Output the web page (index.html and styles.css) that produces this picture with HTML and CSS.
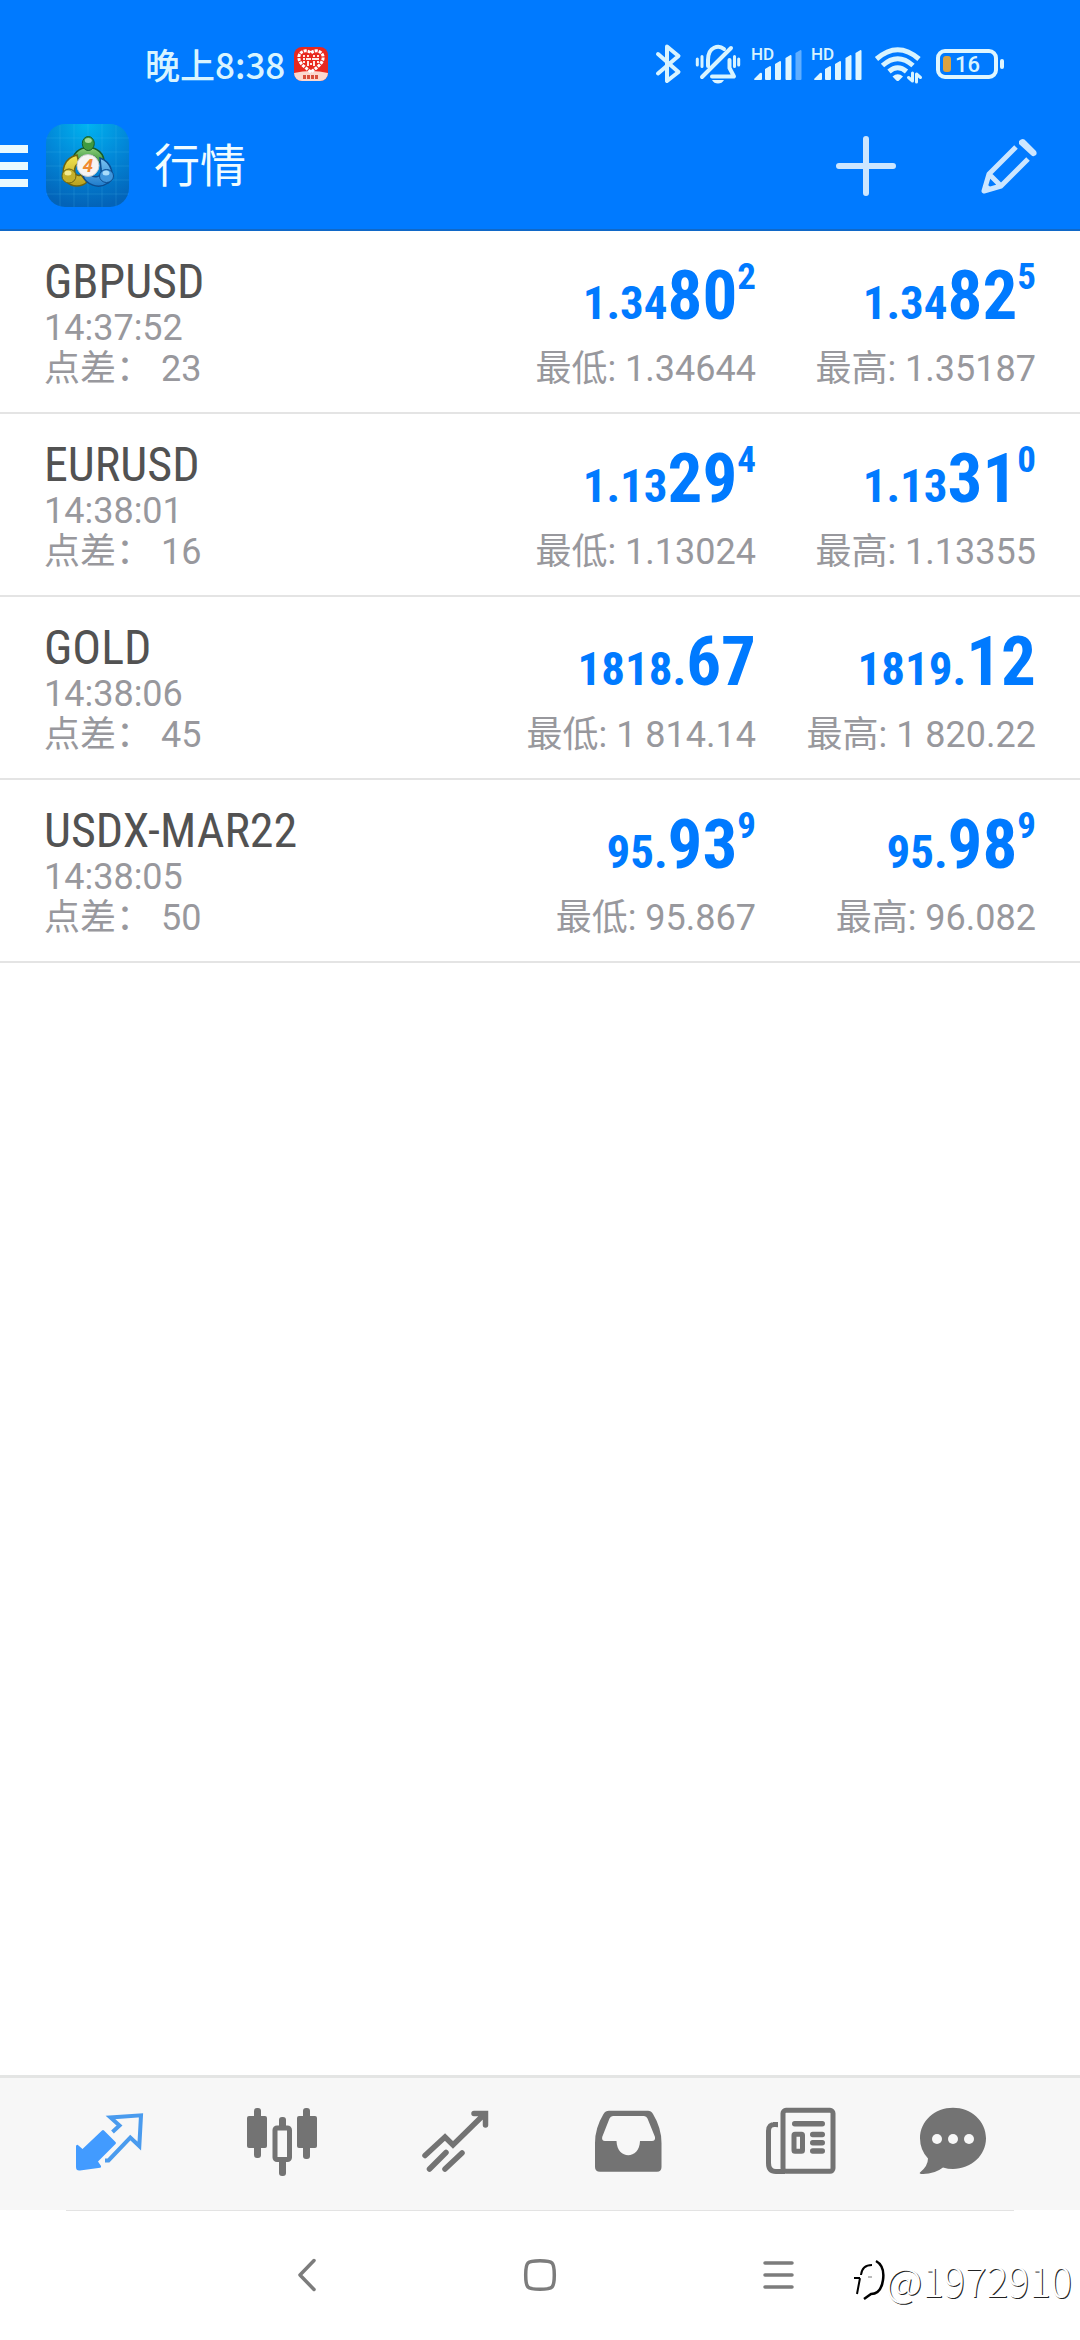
FILE: index.html
```html
<!DOCTYPE html>
<html lang="zh-CN">
<head>
<meta charset="utf-8">
<meta name="viewport" content="width=device-width, initial-scale=1">
<title>行情</title>
<link rel="stylesheet" href="styles.css">
</head>
<body>
<header class="top">
  <div class="status">
    <div class="status-left">
      <span class="clock">晚上8:38</span>
      <svg class="note-icon" viewBox="0 0 34 34" aria-hidden="true">
        <rect width="34" height="34" rx="8" fill="#e8291f"/>
        <path d="M0 26Q17 22 34 26a8 8 0 0 1-8 8H8a8 8 0 0 1-8-8Z" fill="#fbd9cf"/>
        <path d="M17 25C9 19 4 15 5 9c1-5 8-7 12-3c4-4 11-2 12 3c1 6-4 10-12 16Z" fill="none" stroke="#fff" stroke-width="3" stroke-dasharray="3 1"/>
        <path d="M10 8v9M14 8v12M20 8v12M24 8v9M9 12h16M13 17h8" stroke="#ffe9e4" stroke-width="2" stroke-dasharray="2 1"/>
        <path d="M9 30h16" stroke="#d8503c" stroke-width="4" stroke-dasharray="3 1"/>
      </svg>
    </div>
    <div class="status-right">
      <svg width="28" height="40" viewBox="0 0 28 40" aria-label="蓝牙"><path class="s-line" d="M2 10L22.500 28L11 37V2.500L22.500 12L2 29.500"/></svg>
      <svg width="44" height="40" viewBox="0 0 44 40" aria-label="静音">
        <path class="s-line" d="M6 33L35 4M12 22V16C12 2 23 1 28 5M33.500 16V24L38 32.500H16"/>
        <path class="s-thin" d="M1.300 15v6M6 12.500v10M38.500 12.500v10M42.700 15v6"/>
        <path class="s-fill" d="M16 36h12q-2 3.500-6 3.500t-6-3.500Z"/>
      </svg>
      <svg width="48" height="40" viewBox="0 0 48 40" aria-label="信号">
        <text class="hd" x="-1" y="16">HD</text>
        <path class="s-fill" d="M2 35l6-6q2-1 2 1v5q0 1-1 1H3q-1 0-1-1ZM13 25l5-3q1 0 1 1v12q0 1-1 1h-4q-1 0-1-1ZM23 20l5-3q1 0 1 1v17q0 1-1 1h-4q-1 0-1-1ZM33.500 14l5-3q1 0 1 1v23q0 1-1 1h-4q-1 0-1-1Z"/>
        <path class="s-dim" d="M43.500 9l5-3q1 0 1 1v28q0 1-1 1h-4q-1 0-1-1Z"/>
      </svg>
      <svg width="48" height="40" viewBox="0 0 48 40" aria-label="信号">
        <text class="hd" x="-1" y="16">HD</text>
        <path class="s-fill" d="M2 35l6-6q2-1 2 1v5q0 1-1 1H3q-1 0-1-1ZM13 25l5-3q1 0 1 1v12q0 1-1 1h-4q-1 0-1-1ZM23 20l5-3q1 0 1 1v17q0 1-1 1h-4q-1 0-1-1ZM33.500 14l5-3q1 0 1 1v23q0 1-1 1h-4q-1 0-1-1ZM43.500 9l5-3q1 0 1 1v28q0 1-1 1h-4q-1 0-1-1Z"/>
      </svg>
      <svg width="50" height="40" viewBox="0 0 50 40" aria-label="无线网络">
        <path class="s-wide" d="M4.500 15Q25.700-3.500 47 15M10.500 21.500Q25.700 8 41 21.500M17 27.500Q25.700 20 34.500 27.500"/>
        <path class="s-fill" d="M20.500 32.500Q25.700 28 31 32.500L27 36.500Q25.700 37.500 24.400 36.500Z"/>
        <path class="s-thin" d="M40.500 29v8l-4-3.500M44.500 38v-8l4 3.500"/>
      </svg>
      <svg width="70" height="40" viewBox="0 0 70 40" aria-label="电量">
        <rect x="4" y="7" width="58" height="26" rx="7" fill="none" stroke="#dff6ff" stroke-width="4"/>
        <rect x="9" y="12" width="8" height="16" rx="3" fill="#dba240"/>
        <rect class="s-fill" x="66" y="15" width="4" height="10" rx="2"/>
        <text class="level" x="21" y="28">16</text>
      </svg>
    </div>
  </div>
  <div class="appbar">
    <button class="bare" type="button" aria-label="菜单"><svg width="28" height="42" viewBox="0 0 28 42"><path d="M0 0h28v8H0ZM0 17h28v8H0ZM0 34h28v8H0Z" fill="#eafaff"/></svg></button>
    <svg class="logo" viewBox="0 0 83 83" aria-hidden="true">
      <defs>
        <radialGradient id="sky" cx=".5" cy="0" r="1"><stop offset="0" stop-color="#00b4f0"/><stop offset=".5" stop-color="#0288d8"/><stop offset="1" stop-color="#0363b8"/></radialGradient>
        <linearGradient id="gr" x2="0" y2="1"><stop offset="0" stop-color="#8fd07a"/><stop offset="1" stop-color="#2f8f3a"/></linearGradient>
        <linearGradient id="ye" x2="0" y2="1"><stop offset="0" stop-color="#f4e650"/><stop offset="1" stop-color="#b8a020"/></linearGradient>
        <linearGradient id="bl" x2="0" y2="1"><stop offset="0" stop-color="#7cc4f2"/><stop offset="1" stop-color="#1f7ccc"/></linearGradient>
      </defs>
      <rect width="83" height="83" rx="19" fill="url(#sky)"/>
      <path d="M14 1v81M28 0v83M42 0v83M56 0v83M70 1v81M0 14h83M0 28h83M0 42h83M0 56h83M0 70h83" stroke="#5cc8f8" stroke-opacity=".18"/>
      <path d="M27 40C24 18 60 18 58 40L51 37C50 29 35 29 34 37Z" fill="url(#gr)" stroke="#175c28" stroke-width="1.500"/>
      <path d="M31 31C18 34 14 47 20 57C26 64 36 63 41 58L35 51C28 54 26 43 33 39Z" fill="url(#ye)" stroke="#6e6410" stroke-width="1.500"/>
      <path d="M54 34C66 38 70 54 62 59C52 66 40 60 37 52L44 49C47 55 57 54 55 45Z" fill="url(#bl)" stroke="#0d4d90" stroke-width="1.500"/>
      <ellipse cx="42.300" cy="19.500" rx="6" ry="7" fill="#3f9a40" stroke="#175c28"/>
      <ellipse cx="23" cy="52" rx="7" ry="7" fill="#c4b02a" stroke="#6e6410"/>
      <ellipse cx="60.500" cy="52" rx="7" ry="6.500" fill="#3f96dc" stroke="#0d4d90"/>
      <ellipse cx="42.300" cy="16.500" rx="3.500" ry="2.500" fill="#a6dc98"/>
      <ellipse cx="22" cy="49" rx="3.500" ry="2.500" fill="#f3ea90"/>
      <ellipse cx="60" cy="49" rx="3.500" ry="2.500" fill="#a8dcfa"/>
      <circle cx="42" cy="41.500" r="11" fill="#f6f4f2" stroke="#c8ccd0"/>
      <text class="logo-four" x="42" y="48" text-anchor="middle">4</text>
    </svg>
    <h1 class="title">行情</h1>
    <div class="actions">
      <button class="bare" type="button" aria-label="添加"><svg width="60" height="60" viewBox="0 0 60 60"><path class="act" d="M30 3v54M3 30h54" stroke-width="6" stroke-linecap="round"/></svg></button>
      <button class="bare" type="button" aria-label="编辑"><svg width="60" height="60" viewBox="0 0 60 60"><path class="act" d="M37 11L10 38L5 55L22 50L49 23M10 38L22 50" stroke-width="5" stroke-linejoin="round"/><path d="M5 46v9l9-2Z" fill="#cce6ff"/><path d="M40 5q4-4 7 0l10 10q2 4-2 5q-1 1-3-1L40 8Z" fill="#cce6ff"/></svg></button>
    </div>
  </div>
</header>

<main class="main">
  <ul class="quotes">
    <li class="quote">
      <div class="info"><h2 class="symbol">GBPUSD</h2><p class="meta">14:37:52</p><p class="meta">点差： 23</p></div>
      <div class="side"><p class="price"><span class="base">1.34</span>80<span class="pip">2</span></p><p class="meta">最低: 1.34644</p></div>
      <div class="side"><p class="price"><span class="base">1.34</span>82<span class="pip">5</span></p><p class="meta">最高: 1.35187</p></div>
    </li>
    <li class="quote">
      <div class="info"><h2 class="symbol">EURUSD</h2><p class="meta">14:38:01</p><p class="meta">点差： 16</p></div>
      <div class="side"><p class="price"><span class="base">1.13</span>29<span class="pip">4</span></p><p class="meta">最低: 1.13024</p></div>
      <div class="side"><p class="price"><span class="base">1.13</span>31<span class="pip">0</span></p><p class="meta">最高: 1.13355</p></div>
    </li>
    <li class="quote">
      <div class="info"><h2 class="symbol">GOLD</h2><p class="meta">14:38:06</p><p class="meta">点差： 45</p></div>
      <div class="side"><p class="price"><span class="base">1818.</span>67</p><p class="meta">最低: 1 814.14</p></div>
      <div class="side"><p class="price"><span class="base">1819.</span>12</p><p class="meta">最高: 1 820.22</p></div>
    </li>
    <li class="quote">
      <div class="info"><h2 class="symbol">USDX-MAR22</h2><p class="meta">14:38:05</p><p class="meta">点差： 50</p></div>
      <div class="side"><p class="price"><span class="base">95.</span>93<span class="pip">9</span></p><p class="meta">最低: 95.867</p></div>
      <div class="side"><p class="price"><span class="base">95.</span>98<span class="pip">9</span></p><p class="meta">最高: 96.082</p></div>
    </li>
  </ul>
</main>

<nav class="tabs" aria-label="主导航">
  <button class="bare" type="button" aria-label="行情"><svg width="72" height="72" viewBox="0 0 72 72">
    <path d="M3 41q1-2 2.500-.5L9.500 44L29 25.500q1-1 2 0L42.500 37q1 1 0 2L25 56.500L28 61q.5 1.500-1 1.700L7 65.500Q3 66 3 62Z" fill="#429bff"/>
    <path d="M39.500 27L46.500 20.500L37.500 12.500L68 10.300L66.300 41L57.300 32.500L35.500 55.500H32" fill="none" stroke="#4a9bee" stroke-width="4"/>
  </svg></button>
  <button class="bare" type="button" aria-label="图表"><svg width="72" height="72" viewBox="0 0 72 72"><g fill="#737373">
    <rect x="8" y="3" width="7" height="50" rx="3"/><rect x="1" y="11" width="20" height="32" rx="2"/>
    <rect x="33" y="12" width="7" height="59" rx="3"/><rect x="57" y="3" width="7" height="51" rx="3"/><rect x="51" y="11" width="20" height="32" rx="2"/></g>
    <rect x="29" y="23" width="14.500" height="31.500" rx="2" fill="#f7f7f7" stroke="#737373" stroke-width="5"/>
  </svg></button>
  <button class="bare" type="button" aria-label="交易"><svg width="72" height="72" viewBox="0 0 72 72">
    <path d="M6 50.500L26 32L34 40L65 9.500M55 8.500H66.500V20M10.500 64L27 47.500M26 64L43 48" fill="none" stroke="#737373" stroke-width="5.500" stroke-linecap="round"/>
  </svg></button>
  <button class="bare" type="button" aria-label="历史"><svg width="72" height="72" viewBox="0 0 72 72">
    <path fill-rule="evenodd" fill="#737373" d="M17 5.700H56Q59 5.700 61 9Q69.500 23 69.500 38V62Q69.500 66.700 65 66.700H8Q3 66.700 3 62V38Q3 23 11.500 9Q13.500 5.700 17 5.700ZM21 11Q18.500 11 17.500 13.500L10.200 32Q9.500 36 13 36H24.500C25 55 47.500 55 48 36H60Q63.500 36 63 32L55.500 13.500Q54.500 11 52 11Z"/>
  </svg></button>
  <button class="bare" type="button" aria-label="新闻"><svg width="72" height="72" viewBox="0 0 72 72"><g fill="none" stroke="#737373" stroke-width="5">
    <rect x="18" y="5.300" width="50" height="61" rx="3"/><path d="M10.500 17V19.500Q3.500 19 3.500 26V58Q3.500 66.500 11 66.500H20"/><rect x="29" y="29.300" width="8.500" height="17" rx="1"/></g>
    <g fill="#737373"><rect x="27" y="16" width="33" height="5.500" rx="2.700"/><rect x="45" y="26.700" width="15" height="5.500" rx="2.700"/><rect x="45" y="35" width="15" height="5.500" rx="2.700"/><rect x="45" y="43.300" width="15" height="5.500" rx="2.700"/></g>
  </svg></button>
  <button class="bare" type="button" aria-label="消息"><svg width="72" height="72" viewBox="0 0 72 72">
    <path fill="#737373" d="M36 2.700C54 2.700 69 16 69 33.300S54 64 36 64Q31 64 26 62.500Q17 69.500 4.500 69Q2 68.500 3 67.500Q11 61 11 53.500Q3 45 3 33.300C3 16 18 2.700 36 2.700Z"/>
    <circle cx="20" cy="34" r="5" fill="#f7f7f7"/><circle cx="36" cy="34" r="5" fill="#f7f7f7"/><circle cx="52" cy="34" r="5" fill="#f7f7f7"/>
  </svg></button>
</nav>

<footer class="system">
  <button class="bare" type="button" aria-label="返回"><svg width="48" height="48" viewBox="0 0 48 48"><path class="sys" d="M35 9.500L21 24L35 38.500"/></svg></button>
  <button class="bare" type="button" aria-label="主屏幕"><svg width="48" height="48" viewBox="0 0 48 48"><path class="sys" d="M24 9.700C37 9.700 38.300 11 38.300 24S37 38.300 24 38.300S9.700 37 9.700 24S11 9.700 24 9.700Z"/></svg></button>
  <button class="bare" type="button" aria-label="最近任务"><svg width="48" height="48" viewBox="0 0 48 48"><path class="sys" d="M12 12H39M12 24H39M12 36H39"/></svg></button>
  <div class="mark">
    <svg width="34" height="42" viewBox="0 0 34 42" aria-hidden="true"><g fill="none" stroke="#000"><path d="M5 35L8 19M2 19H8M9 16Q10 6 20 6" stroke-width="2"/><path d="M24 2Q33 7 31 21Q29 35 19 35L12 40" stroke-width="2.500"/><path d="M16 18h4" stroke="#777"/></g></svg>
    <span>@1972910</span>
  </div>
</footer>
</body>
</html>
```
FILE: styles.css
```css
* { box-sizing: border-box; }

body {
  margin: 0;
  min-height: 100vh;
  display: flex;
  flex-direction: column;
  background: #fff;
  color: #98989d;
  font-family: Roboto, "Noto Sans CJK SC", sans-serif;
}

h1, h2, p, ul { margin: 0; padding: 0; font-weight: 400; }
svg { display: block; overflow: visible; }

.bare {
  display: block;
  padding: 0;
  border: 0;
  background: none;
}

/* Header */
.top {
  background: #007aff;
  border-bottom: 2px solid #1068c8;
}

.status {
  display: flex;
  align-items: center;
  justify-content: space-between;
  padding: 44px 76px 18px 145px;
}

.status-left { display: flex; align-items: center; gap: 9px; }
.status-right { display: flex; align-items: center; gap: 12px; }

.clock {
  font-family: "Noto Sans CJK SC", sans-serif;
  font-size: 35px;
  font-weight: 500;
  line-height: 40px;
  color: #d8f4ff;
}

.note-icon { width: 34px; height: 34px; }

.s-line, .s-wide, .s-thin {
  fill: none;
  stroke: #d8f4ff;
  stroke-width: 4px;
  stroke-linecap: round;
  stroke-linejoin: round;
}
.s-wide { stroke-width: 5px; stroke-linecap: butt; }
.s-thin { stroke-width: 3px; }
.s-fill { fill: #dff6ff; }
.s-dim { fill: #60aeff; }

.hd, .level {
  font-family: Roboto, sans-serif;
  font-size: 17px;
  font-weight: 500;
  fill: #d8f4ff;
}

.level { font-size: 22px; }

.appbar {
  display: flex;
  align-items: center;
  height: 127px;
  padding-right: 41px;
}

.logo { width: 83px; height: 83px; margin: 0 25px 0 18px; }

.logo-four {
  font-family: "Open Sans", sans-serif;
  font-size: 18px;
  font-style: italic;
  font-weight: 700;
  fill: #f08a30;
}

.title {
  font-size: 46px;
  line-height: 60px;
  color: #f0fcff;
}

.actions { display: flex; gap: 83px; margin-left: auto; }
.act { fill: none; stroke: #cce6ff; }

/* Quotes */
.main { flex: 1; }
.quotes { list-style: none; }

.quote {
  display: grid;
  grid-template-columns: 1fr 280px 280px;
  padding: 25px 44px 22px;
  border-bottom: 2px solid #e4e4e4;
}

.symbol {
  font-family: "Roboto Condensed", Roboto, sans-serif;
  font-size: 48px;
  line-height: 52px;
  color: #525252;
}

.meta { font-size: 36px; line-height: 41px; }

.side { text-align: right; white-space: nowrap; }

.price {
  margin-bottom: 14px;
  font-family: "Roboto Condensed", Roboto, sans-serif;
  font-size: 69px;
  font-weight: 700;
  line-height: 79px;
  color: #007aff;
}

.base { font-size: 47px; line-height: 1; }
.pip { font-size: 37px; line-height: 0; vertical-align: 30px; }

/* Tab bar */
.tabs {
  display: grid;
  grid-template-columns: 173fr 173fr 173fr 173fr 173fr 132fr;
  justify-items: center;
  padding: 27px 61px 33px 22px;
  background: #f7f7f7;
  border-top: 3px solid #e4e5e4;
}

/* System bar */
.system {
  position: relative;
  display: flex;
  justify-content: center;
  gap: 189px;
  padding: 41px 0;
}

.system::before {
  content: "";
  position: absolute;
  top: 0;
  left: 66px;
  right: 66px;
  height: 1px;
  background: #e3e3e3;
}

.sys {
  fill: none;
  stroke: #7c7c7c;
  stroke-width: 3.5px;
  stroke-linecap: round;
  stroke-linejoin: round;
}

.mark {
  position: absolute;
  right: 8px;
  bottom: 36px;
  display: flex;
  align-items: center;
  font-family: "Noto Sans CJK SC", sans-serif;
  font-size: 40px;
  font-weight: 300;
  line-height: 48px;
  color: #fff;
  text-shadow: 1px 1px 0 #222;
}
```
